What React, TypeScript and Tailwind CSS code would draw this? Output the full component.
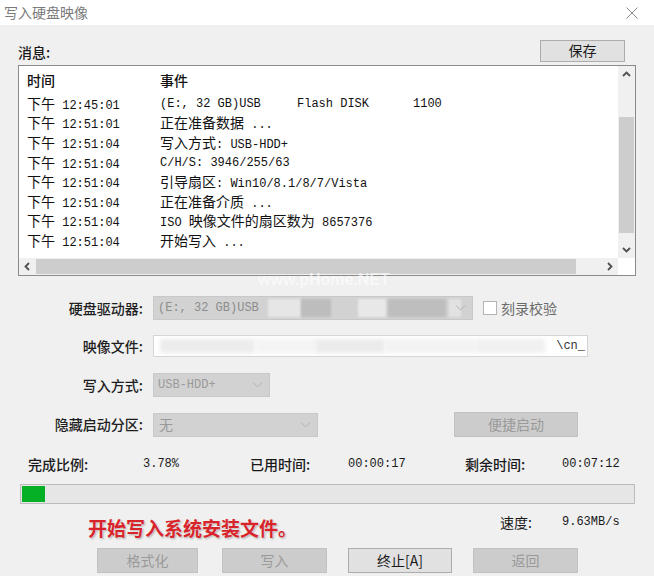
import React from 'react';

const CJK = /([\u3000-\u303f\u4e00-\u9fff\uff00-\uffef]+)/;

// CJK runs are wider than the mono latin text in the log, like SimSun
const Mixed = ({ text }: { text: string }) => (
  <>
    {text.split(CJK).map((part, i) =>
      CJK.test(part) ? (
        <span key={i} className="text-[14px] font-['Noto_Sans_CJK_SC',sans-serif]">{part}</span>
      ) : (
        <span key={i}>{part}</span>
      )
    )}
  </>
);

const logRows = [
  { time: '12:45:01', event: '' },
  { time: '12:51:01', event: '正在准备数据 ...' },
  { time: '12:51:04', event: '写入方式: USB-HDD+' },
  { time: '12:51:04', event: 'C/H/S: 3946/255/63' },
  { time: '12:51:04', event: '引导扇区: Win10/8.1/8/7/Vista' },
  { time: '12:51:04', event: '正在准备介质 ...' },
  { time: '12:51:04', event: 'ISO 映像文件的扇区数为 8657376' },
  { time: '12:51:04', event: '开始写入 ...' },
];

const Chevron = ({ dir }: { dir: 'up' | 'down' | 'left' | 'right' }) => {
  const pts = {
    up: '1,6 4.5,2.5 8,6',
    down: '1,3 4.5,6.5 8,3',
    left: '6,1 2.5,4.5 6,8',
    right: '3,1 6.5,4.5 3,8',
  }[dir];
  return (
    <svg width="9" height="9" viewBox="0 0 9 9">
      <polyline points={pts} fill="none" stroke="#505050" strokeWidth="1.8" />
    </svg>
  );
};

const SelectArrow = () => (
  <svg width="11" height="7" viewBox="0 0 11 7" className="absolute right-[6px] top-1/2 -translate-y-1/2">
    <polyline points="1,1 5.5,5.5 10,1" fill="none" stroke="#b0b0b0" strokeWidth="1" />
  </svg>
);

const Label = ({ children }: { children: React.ReactNode }) => (
  <div className="w-[125px] text-right text-[14px] font-medium text-[#1e1e1e] mr-[10px]">{children}</div>
);

const DisabledButton = ({ children, w }: { children: React.ReactNode; w: string }) => (
  <div className={`${w} h-[25px] bg-[#cccccc] border border-[#c2c2c2] flex items-center justify-center text-[14px] text-[#9a9a9a]`}>
    {children}
  </div>
);

const App = () => {
  return (
    <div className="w-[654px] h-[576px] bg-[#f0f0f0] relative overflow-hidden font-['Noto_Sans_CJK_SC',sans-serif] text-[#1a1a1a]">
      {/* Title bar */}
      <div className="h-[25px] bg-white flex items-center justify-between pl-[4px] pr-[16px]">
        <span className="text-[14px] text-[#7a7a7a]">写入硬盘映像</span>
        <svg width="12" height="12" viewBox="0 0 12 12">
          <line x1="0.5" y1="0.5" x2="11.5" y2="11.5" stroke="#8a8a8a" strokeWidth="1" />
          <line x1="11.5" y1="0.5" x2="0.5" y2="11.5" stroke="#8a8a8a" strokeWidth="1" />
        </svg>
      </div>

      <div className="px-[18px]">
        {/* Message header */}
        <div className="mt-[15px] h-[21px] flex items-center">
          <span className="text-[14px] mt-[3px] font-medium">消息:</span>
          <div className="ml-auto mr-[11px] w-[85px] h-[22px] bg-[#e1e1e1] border border-[#adadad] flex items-center justify-center text-[14px]">
            保存
          </div>
        </div>

        {/* Log list */}
        <div className="mt-[4px] w-[618px] h-[211px] border border-[#8a8a8a] bg-white flex flex-col">
          <div className="flex h-[192px]">
            <div className="flex-1 pl-[8px] font-['Liberation_Mono','Noto_Sans_CJK_SC',monospace] text-[12px] text-[#111]">
              <div className="h-[28px] flex items-center text-[14px] font-medium font-['Noto_Sans_CJK_SC',sans-serif]">
                <span className="w-[133px]">时间</span>
                <span>事件</span>
              </div>
              {logRows.map((row, i) => (
                <div key={i} className="h-[19.6px] flex items-center whitespace-pre">
                  <span className="w-[133px]">
                    <Mixed text={`下午 ${row.time}`} />
                  </span>
                  {i === 0 ? (
                    <>
                      <span className="w-[137px]">(E:, 32 GB)USB</span>
                      <span className="w-[116px]">Flash DISK</span>
                      <span>1100</span>
                    </>
                  ) : (
                    <span>
                      <Mixed text={row.event} />
                    </span>
                  )}
                </div>
              ))}
            </div>
            {/* vertical scrollbar */}
            <div className="w-[17px] bg-[#f0f0f0] flex flex-col">
              <div className="h-[17px] flex items-center justify-center">
                <Chevron dir="up" />
              </div>
              <div className="flex-1 pt-[34px] pb-[8px] px-[1px] flex">
                <div className="flex-1 bg-[#cdcdcd]" />
              </div>
              <div className="h-[17px] flex items-center justify-center">
                <Chevron dir="down" />
              </div>
            </div>
          </div>
          {/* horizontal scrollbar */}
          <div className="flex h-[17px]">
            <div className="flex-1 bg-[#f0f0f0] flex">
              <div className="w-[17px] flex items-center justify-center">
                <Chevron dir="left" />
              </div>
              <div className="flex-1 py-[1px] pr-[25px] flex">
                <div className="flex-1 bg-[#cdcdcd]" />
              </div>
              <div className="w-[17px] flex items-center justify-center">
                <Chevron dir="right" />
              </div>
            </div>
            <div className="w-[17px] bg-white" />
          </div>
        </div>

        {/* Form */}
        <div className="mt-[20px] h-[24px] flex items-center">
          <Label>硬盘驱动器:</Label>
          <div className="relative w-[320px] h-[24px] bg-[#d2d2d2] border border-[#c8c8c8] flex items-center pl-[4px] font-['Liberation_Mono',monospace] text-[12px] text-[#8c8c8c]">
            <span className="w-[110px]">(E:, 32 GB)USB</span>
            <div className="w-[33px] h-[18px] bg-[#e6e6e6] blur-[1px]" />
            <div className="w-[30px] h-[18px] bg-[#bdbdbd] blur-[1px]" />
            <div className="w-[27px]" />
            <div className="w-[28px] h-[18px] bg-[#e8e8e8] blur-[1px]" />
            <div className="w-[58px] h-[18px] bg-[#bebebe] blur-[1px] ml-[2px]" />
            <div className="w-[12px] h-[18px] bg-[#e2e2e2] blur-[1px] ml-[3px]" />
            <SelectArrow />
          </div>
          <div className="ml-[10px] w-[14px] h-[14px] bg-white border border-[#b5b5b5]" />
          <span className="ml-[4px] text-[14px] text-[#6a6a6a]">刻录校验</span>
        </div>

        <div className="mt-[15px] h-[22px] flex items-center">
          <Label>映像文件:</Label>
          <div className="w-[435px] h-[22px] bg-white border border-[#d5d5d5] flex items-center pl-[6px] pr-[2px] font-['Liberation_Mono',monospace] text-[12px] text-[#333]">
            <div className="w-[95px] h-[14px] bg-[#ececec] blur-[2px]" />
            <div className="w-[60px] h-[14px] bg-[#f4f4f4] blur-[2px]" />
            <div className="w-[70px] h-[14px] bg-[#ebebeb] blur-[2px]" />
            <div className="w-[90px] h-[14px] bg-[#f2f2f2] blur-[2px]" />
            <div className="w-[70px] h-[14px] bg-[#f0f0f0] blur-[2px]" />
            <span className="ml-auto">\cn_</span>
          </div>
        </div>

        <div className="mt-[16px] h-[24px] flex items-center">
          <Label>写入方式:</Label>
          <div className="relative w-[117px] h-[24px] bg-[#d2d2d2] border border-[#c8c8c8] flex items-center pl-[4px] font-['Liberation_Mono',monospace] text-[12px] text-[#9a9a9a]">
            USB-HDD+
            <SelectArrow />
          </div>
        </div>

        <div className="mt-[15px] h-[25px] flex items-center">
          <Label>隐藏启动分区:</Label>
          <div className="relative w-[165px] h-[24px] bg-[#d2d2d2] border border-[#c8c8c8] flex items-center pl-[5px] text-[14px] text-[#9a9a9a]">
            无
            <SelectArrow />
          </div>
          <div className="ml-[136px]">
            <DisabledButton w="w-[124px]">便捷启动</DisabledButton>
          </div>
        </div>

        {/* Stats */}
        <div className="mt-[17px] h-[20px] flex items-center pl-[10px] text-[14px] font-medium">
          <span className="w-[115px]">完成比例:</span>
          <span className="w-[107px] font-['Liberation_Mono',monospace] text-[12px] font-normal">3.78%</span>
          <span className="w-[98px]">已用时间:</span>
          <span className="w-[117px] font-['Liberation_Mono',monospace] text-[12px] font-normal">00:00:17</span>
          <span className="w-[97px]">剩余时间:</span>
          <span className="font-['Liberation_Mono',monospace] text-[12px] font-normal">00:07:12</span>
        </div>

        {/* Progress bar */}
        <div className="mt-[10px] ml-[2px] w-[615px] h-[20px] bg-[#e6e6e6] border border-[#bcbcbc] flex p-[1px]">
          <div className="w-[23px] bg-[#06b025]" />
        </div>

        {/* Status + speed */}
        <div className="mt-[8px] h-[36px] flex items-start">
          <span className="ml-[70px] mt-[4px] w-[412px] text-[19px] leading-[24px] font-bold text-[#d8232a] [text-shadow:0_0_2px_#fff,1px_1px_2px_#9a9a9a]">
            开始写入系统安装文件。
          </span>
          <span className="w-[62px] h-[20px] flex items-center text-[14px]">速度:</span>
          <span className="h-[20px] flex items-center font-['Liberation_Mono',monospace] text-[12px]">9.63MB/s</span>
        </div>

        {/* Buttons */}
        <div className="h-[25px] flex items-center ml-[79px]">
          <DisabledButton w="w-[101px]">格式化</DisabledButton>
          <div className="ml-[24px]">
            <DisabledButton w="w-[105px]">写入</DisabledButton>
          </div>
          <div className="ml-[21px] w-[104px] h-[25px] bg-[#e1e1e1] border border-[#adadad] flex items-center justify-center text-[14px]">
            终止[A]
          </div>
          <div className="ml-[21px]">
            <DisabledButton w="w-[105px]">返回</DisabledButton>
          </div>
        </div>
      </div>

      {/* watermark */}
      <div className="absolute left-[258px] top-[268px] text-[16px] font-bold text-white/60 font-['Liberation_Sans',sans-serif]">
        www.pHome.NET
      </div>
    </div>
  );
};

export default App;
